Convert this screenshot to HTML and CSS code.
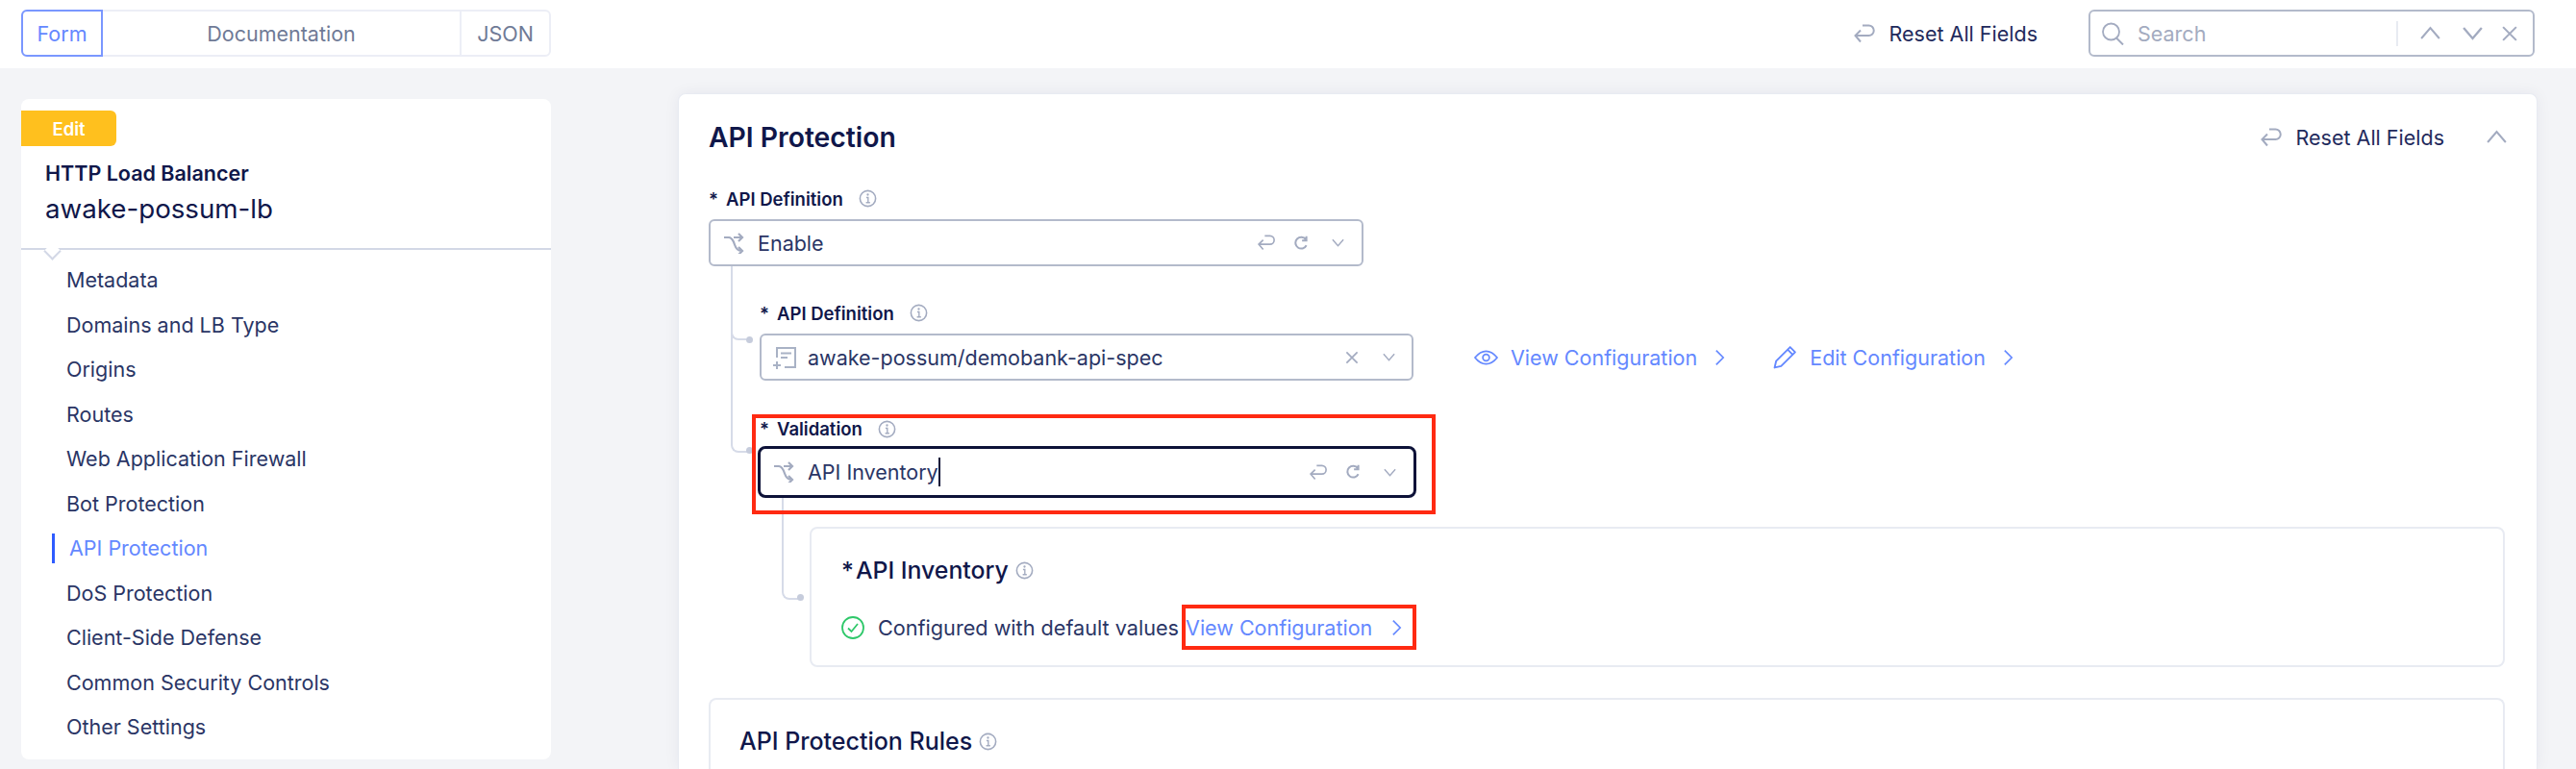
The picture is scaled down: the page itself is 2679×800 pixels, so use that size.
FILE: index.html
```html
<!DOCTYPE html>
<html lang="en">
<head>
  <meta charset="UTF-8">
  <title>HTTP Load Balancer</title>
  <link rel="stylesheet" href="styles.css">
</head>
<body>
  <svg class="icon-defs" width="0" height="0">
    <defs>
      <symbol id="i-reset" viewBox="0 0 24 22"><path d="M10 2.500h6.500a5.200 5.200 0 0 1 0 10.500H2.500M8 7.500 2.500 13 8 19.500" fill="none" stroke="currentColor" stroke-width="2"/></symbol>
      <symbol id="i-redo" viewBox="0 0 16 16"><path d="M12.500 4.500A5.300 5.300 0 1 0 13 10M13 1.500v4H9" fill="none" stroke="currentColor" stroke-width="1.800"/></symbol>
      <symbol id="i-down" viewBox="0 0 16 16"><path d="M2 4.500 8 11.500 14 4.500" fill="none" stroke="currentColor" stroke-width="1.500"/></symbol>
      <symbol id="i-up" viewBox="0 0 16 16"><path d="M2 11.500 8 4.500 14 11.500" fill="none" stroke="currentColor" stroke-width="1.300"/></symbol>
      <symbol id="i-close" viewBox="0 0 16 16"><path d="M3 3l10 10M13 3 3 13" fill="none" stroke="currentColor" stroke-width="1.500"/></symbol>
      <symbol id="i-right" viewBox="0 0 12 20"><path d="M2 2l8 8-8 8" fill="none" stroke="currentColor" stroke-width="1.800"/></symbol>
      <symbol id="i-branch" viewBox="0 0 22 22"><path d="M1 5h5c3 0 4.500 3 6 7.500S15 19 19 19M11 5h9M16 1l4 4-4 4M16 15l4 4-4 4" fill="none" stroke="currentColor" stroke-width="2.200"/></symbol>
      <symbol id="i-info" viewBox="0 0 18 18"><circle cx="9" cy="9" r="7.700" fill="none" stroke="currentColor" stroke-width="1.500"/><path d="M7.500 8h1.800v5M7.200 13h4" fill="none" stroke="currentColor" stroke-width="1.300"/><circle cx="9" cy="5.200" r="1.100" fill="currentColor"/></symbol>
      <symbol id="i-doc" viewBox="0 0 24 24"><path d="M4 12V2h19v20H12M8 7.500h11M8 12h7M0 20h8M4 16v8" fill="none" stroke="currentColor" stroke-width="2"/></symbol>
    </defs>
  </svg>

  <header class="topbar">
    <div class="tabs">
      <a class="tab tab-active">Form</a>
      <a class="tab tab-docs">Documentation</a>
      <a class="tab tab-json">JSON</a>
    </div>
    <div class="topbar-right">
      <a class="reset-link"><svg class="ic-reset"><use href="#i-reset"/></svg>Reset All Fields</a>
      <div class="search">
        <svg class="search-icon" viewBox="0 0 24 24"><circle cx="10.500" cy="10" r="8.500" fill="none" stroke="currentColor" stroke-width="1.800"/><path d="M16 16.500l7 7" stroke="currentColor" stroke-width="2"/></svg>
        <span class="search-text">Search</span>
        <span class="search-tools">
          <svg class="ic-nav"><use href="#i-up"/></svg>
          <svg class="ic-nav"><use href="#i-down"/></svg>
          <svg class="ic-x"><use href="#i-close"/></svg>
        </span>
      </div>
    </div>
  </header>

  <div class="page">
    <aside class="sidebar">
      <span class="badge">Edit</span>
      <div class="lb-type">HTTP Load Balancer</div>
      <div class="lb-name">awake-possum-lb</div>
      <nav class="nav">
        <a class="nav-item">Metadata</a>
        <a class="nav-item">Domains and LB Type</a>
        <a class="nav-item">Origins</a>
        <a class="nav-item">Routes</a>
        <a class="nav-item">Web Application Firewall</a>
        <a class="nav-item">Bot Protection</a>
        <a class="nav-item nav-active">API Protection</a>
        <a class="nav-item">DoS Protection</a>
        <a class="nav-item">Client-Side Defense</a>
        <a class="nav-item">Common Security Controls</a>
        <a class="nav-item">Other Settings</a>
      </nav>
    </aside>

    <main class="card">
      <div class="card-head">
        <h2 class="card-title">API Protection</h2>
        <a class="reset-link card-reset"><svg class="ic-reset"><use href="#i-reset"/></svg>Reset All Fields</a>
        <svg class="card-up"><use href="#i-up"/></svg>
      </div>

      <div class="field">
        <label class="label"><span class="star">*</span>API Definition<svg class="ic-info"><use href="#i-info"/></svg></label>
        <div class="select select-enable">
          <svg class="ic-lead"><use href="#i-branch"/></svg>
          <span class="select-text">Enable</span>
          <span class="select-tools">
            <svg class="ic-tool-reset"><use href="#i-reset"/></svg>
            <svg class="ic-tool"><use href="#i-redo"/></svg>
            <svg class="ic-tool"><use href="#i-down"/></svg>
          </span>
        </div>
      </div>

      <div class="nested">
        <i class="branch-top"></i>
        <i class="dot dot-top"></i>
        <i class="dot dot-bottom"></i>

        <div class="field-sub">
          <label class="label"><span class="star">*</span>API Definition<svg class="ic-info"><use href="#i-info"/></svg></label>
          <div class="field-row">
            <div class="select select-def">
              <svg class="ic-doc"><use href="#i-doc"/></svg>
              <span class="select-text">awake-possum/demobank-api-spec</span>
              <span class="select-tools">
                <svg class="ic-tool"><use href="#i-close"/></svg>
                <svg class="ic-tool"><use href="#i-down"/></svg>
              </span>
            </div>
            <a class="link link-view">
              <svg class="ic-eye" viewBox="0 0 26 16"><path d="M1 8C5 3 9 1 13 1s8 2 12 7c-4 5-8 7-12 7S5 13 1 8Z" fill="none" stroke="currentColor" stroke-width="1.800" stroke-linejoin="round"/><circle cx="13" cy="8" r="3.500" fill="none" stroke="currentColor" stroke-width="1.800"/></svg>
              View Configuration
              <svg class="ic-right"><use href="#i-right"/></svg>
            </a>
            <a class="link link-edit">
              <svg class="ic-pencil" viewBox="0 0 24 24"><path d="M1.500 22.500 3 16 17 2l5 5L8 21ZM14.500 4.500l5 5" fill="none" stroke="currentColor" stroke-width="1.800" stroke-linejoin="round"/></svg>
              Edit Configuration
              <svg class="ic-right"><use href="#i-right"/></svg>
            </a>
          </div>
        </div>

        <div class="highlight highlight-field">
          <label class="label"><span class="star">*</span>Validation<svg class="ic-info"><use href="#i-info"/></svg></label>
          <div class="select select-focus">
            <svg class="ic-lead"><use href="#i-branch"/></svg>
            <span class="select-text">API Inventory<i class="caret"></i></span>
            <span class="select-tools">
              <svg class="ic-tool-reset"><use href="#i-reset"/></svg>
              <svg class="ic-tool"><use href="#i-redo"/></svg>
              <svg class="ic-tool"><use href="#i-down"/></svg>
            </span>
          </div>
        </div>

        <div class="sub-card">
          <div class="sub-title"><span class="star">*</span>API Inventory<svg class="ic-info"><use href="#i-info"/></svg></div>
          <div class="status">
            <svg class="ic-check" viewBox="0 0 24 24"><circle cx="12" cy="12" r="11" fill="none" stroke="currentColor" stroke-width="1.800"/><path d="M7 12.500l3.500 3.500L17 8" fill="none" stroke="currentColor" stroke-width="1.800"/></svg>
            <span>Configured with default values</span>
            <a class="link highlight highlight-link">View Configuration<svg class="ic-right"><use href="#i-right"/></svg></a>
          </div>
        </div>
      </div>

      <section class="rules">
        <div class="rules-title">API Protection Rules<svg class="ic-info"><use href="#i-info"/></svg></div>
      </section>
    </main>
  </div>
</body>
</html>
```

FILE: styles.css
```css
* {
  box-sizing: border-box;
}
html, body {
  height: 800px;
  overflow: hidden;
}
body {
  margin: 0;
  font-family: Inter, "Liberation Sans", sans-serif;
  background-color: #f3f4f7;
  color: #1b2559;
}
a {
  color: inherit;
  text-decoration: none;
}
svg {
  display: block;
  flex: none;
}
.icon-defs {
  position: absolute;
}

/* top bar */
.topbar {
  height: 71px;
  padding: 10px 43px 12px 22px;
  display: flex;
  justify-content: space-between;
  background: #fff;
}
.tabs {
  width: 551px;
  height: 49px;
  display: flex;
  border: 2px solid #eceef6;
  border-radius: 6px;
  font-size: 21.500px;
  color: #6f7a96;
}
.tab {
  display: flex;
  align-items: center;
  justify-content: center;
}
.tab-active {
  width: 85px;
  margin: -2px 0 -2px -2px;
  border: 2px solid #7a97ff;
  border-radius: 6px 0 0 6px;
  color: #6488ff;
}
.tab-docs {
  flex: 1;
  border-right: 2px solid #eceef6;
}
.tab-json {
  width: 91px;
}
.topbar-right {
  display: flex;
  align-items: center;
}
.reset-link {
  display: flex;
  align-items: center;
  gap: 14px;
  font-size: 21.500px;
  color: #1f2a5c;
}
.ic-reset {
  width: 24px;
  height: 22px;
  color: #a3abc0;
}
.search {
  width: 464px;
  height: 49px;
  margin-left: 53px;
  padding: 0 13px 0 11px;
  display: flex;
  align-items: center;
  border: 2px solid #b3bacb;
  border-radius: 6px;
}
.search-icon {
  width: 24px;
  height: 24px;
  color: #a3abc0;
}
.search-text {
  margin-left: 14px;
  font-size: 21.500px;
  color: #a3abc0;
}
.search-tools {
  height: 26px;
  margin-left: auto;
  padding-left: 21px;
  display: flex;
  align-items: center;
  gap: 19px;
  border-left: 2px solid #e8ebf2;
  color: #a3abc0;
}
.ic-nav {
  width: 25px;
  height: 25px;
}
.ic-x {
  width: 22px;
  height: 22px;
  margin-left: -4px;
}

/* page */
.page {
  display: flex;
  padding-left: 22px;
}
.sidebar {
  width: 551px;
  height: 687px;
  margin-top: 32px;
  padding-top: 12px;
  background: #fff;
  border-radius: 8px;
}
.badge {
  width: 99px;
  height: 37px;
  display: flex;
  align-items: center;
  justify-content: center;
  font-size: 18.500px;
  font-weight: 600;
  color: #fff;
  background: #ffc01e;
  border-radius: 0 6px 6px 0;
}
.lb-type {
  margin: 15px 25px 0;
  font-size: 21.500px;
  font-weight: 600;
  color: #10174a;
}
.lb-name {
  margin: 7px 25px 0;
  font-size: 27.700px;
  color: #10174a;
}
.nav {
  position: relative;
  margin-top: 24px;
  padding: 8px 0 0 47px;
  border-top: 2px solid #d3d8e6;
}
.nav::before {
  content: "";
  position: absolute;
  left: 26px;
  top: -5px;
  width: 11px;
  height: 11px;
  background: #fff;
  border-right: 2px solid #d3d8e6;
  border-bottom: 2px solid #d3d8e6;
  transform: rotate(45deg);
}
.nav-item {
  height: 46.500px;
  display: flex;
  align-items: center;
  font-size: 21.500px;
  color: #2a3565;
}
.nav-active {
  position: relative;
  padding-left: 3px;
  color: #6488ff;
}
.nav-active::before {
  content: "";
  position: absolute;
  left: -15px;
  top: 8px;
  width: 3px;
  height: 31px;
  background: #2f5cff;
}

/* main card */
.card {
  width: 1934px;
  height: 703px;
  margin: 26px 0 0 132px;
  padding-left: 31px;
  overflow: hidden;
  background: #fff;
  border: 1px solid #e8ebf2;
  border-bottom: none;
  border-radius: 8px 8px 0 0;
  box-shadow: 0 0 16px rgba(27, 37, 89, 0.06);
}
.card-head {
  height: 92px;
  padding-bottom: 3px;
  display: flex;
  align-items: center;
  padding-right: 29px;
}
.card-title {
  margin: 0;
  font-size: 28.300px;
  font-weight: 600;
  color: #10174a;
}
.card-reset {
  margin-left: auto;
  gap: 13px;
}
.card-reset .ic-reset {
  width: 26px;
}
.card-up {
  width: 25px;
  height: 25px;
  margin-left: 42px;
  color: #a3abc0;
}
.field {
  width: 681px;
}
.label {
  height: 36px;
  margin-top: 2px;
  padding-bottom: 7px;
  display: flex;
  align-items: center;
  font-size: 18.500px;
  font-weight: 600;
  color: #10174a;
}
.star {
  margin-right: 8px;
}
.ic-info {
  width: 19px;
  height: 19px;
  margin-left: 16px;
  color: #a3abc0;
}
.select {
  height: 49px;
  padding: 0 16px 0 13px;
  display: flex;
  align-items: center;
  background: #fff;
  border: 2px solid #b3bacb;
  border-radius: 6px;
  font-size: 21.500px;
  color: #2a3565;
}
.ic-lead {
  width: 22px;
  height: 22px;
  color: #a3abc0;
}
.ic-doc {
  width: 24px;
  height: 24px;
  margin-right: -2px;
  color: #a9b2c5;
}
.select-text {
  margin-left: 14px;
  display: flex;
  align-items: center;
}
.select-tools {
  margin-left: auto;
  display: flex;
  align-items: center;
  gap: 20px;
  color: #a3abc0;
}
.ic-tool-reset {
  width: 20px;
  height: 19px;
  margin-right: -3px;
}
.ic-tool {
  width: 18px;
  height: 18px;
}
.select-tools .ic-tool:last-child {
  width: 15px;
  height: 15px;
  margin: 0 1.500px;
}

/* nested branch */
.nested {
  position: relative;
  margin-left: 23px;
  padding: 32px 0 0 30px;
}
.nested::before {
  content: "";
  position: absolute;
  left: 0;
  top: 0;
  width: 16px;
  height: 192px;
  border-left: 2px solid #d6dbe8;
  border-bottom: 2px solid #d6dbe8;
  border-bottom-left-radius: 8px;
}
.branch-top {
  position: absolute;
  left: 0;
  top: 68px;
  width: 16px;
  height: 9px;
  border-left: 2px solid #d6dbe8;
  border-bottom: 2px solid #d6dbe8;
  border-bottom-left-radius: 8px;
}
.dot {
  position: absolute;
  left: 16px;
  width: 7px;
  height: 7px;
  border-radius: 50%;
  background: #c6ccdc;
}
.dot-top {
  top: 73px;
}
.dot-bottom {
  top: 188px;
}
.field-row {
  display: flex;
  align-items: center;
}
.select-def {
  width: 680px;
  padding-right: 15px;
  padding-left: 12px;
}
.link {
  display: flex;
  align-items: center;
  font-size: 21.500px;
  color: #6488ff;
}
.ic-eye {
  width: 25px;
  height: 16px;
  margin-right: 13px;
}
.ic-pencil {
  width: 25px;
  height: 25px;
  margin-right: 13px;
}
.link-view {
  margin-left: 63px;
}
.link-edit {
  margin-left: 50px;
}
.ic-right {
  width: 11px;
  height: 20px;
  margin-left: 18px;
}

/* red marks */
.highlight {
  border: 4px solid #ff2a12;
}
.highlight-field {
  position: relative;
  z-index: 1;
  width: 711px;
  height: 104px;
  margin: 35px 0 0 -8px;
}
.highlight-field .label {
  height: 29px;
  margin: 0;
  padding: 0 0 7px 4px;
}
.select-focus {
  width: 685px;
  height: 54px;
  margin-left: 2px;
  padding-left: 13px;
  border: 3px solid #0d1238;
  border-radius: 8px;
}
.caret {
  width: 2px;
  height: 30px;
  background: #0d1238;
}
.sub-card {
  position: relative;
  width: 1763px;
  height: 146px;
  margin: 13px 0 0 52px;
  padding: 28px 0 0 31px;
  border: 2px solid #e8ebf2;
  border-radius: 8px;
}
.sub-card::before {
  content: "";
  position: absolute;
  left: -31px;
  top: -32px;
  width: 16px;
  height: 104px;
  border-left: 2px solid #d6dbe8;
  border-bottom: 2px solid #d6dbe8;
  border-bottom-left-radius: 8px;
}
.sub-card::after {
  content: "";
  position: absolute;
  left: -15px;
  top: 68px;
  width: 7px;
  height: 7px;
  border-radius: 50%;
  background: #c6ccdc;
}
.sub-title {
  height: 30px;
  display: flex;
  align-items: center;
  font-size: 24.800px;
  font-weight: 500;
  color: #10174a;
}
.sub-title .star {
  margin-right: 2px;
}
.sub-title .ic-info,
.rules-title .ic-info {
  margin-left: 7px;
}
.status {
  margin-top: 21px;
  display: flex;
  align-items: center;
  font-size: 21.650px;
  color: #2a3565;
}
.ic-check {
  width: 24px;
  height: 24px;
  margin-right: 14px;
  color: #2fc86a;
}
.highlight-link {
  height: 47px;
  margin-left: 3px;
  padding-right: 11px;
  font-size: 21.500px;
}
.highlight-link .ic-right {
  margin-left: 20px;
}
.rules {
  width: 1868px;
  height: 74px;
  margin-top: 32px;
  padding: 28px 0 0 30px;
  border: 2px solid #e8ebf2;
  border-bottom: none;
  border-radius: 8px 8px 0 0;
}
.rules-title {
  height: 30px;
  display: flex;
  align-items: center;
  font-size: 25px;
  font-weight: 500;
  color: #10174a;
}
```
